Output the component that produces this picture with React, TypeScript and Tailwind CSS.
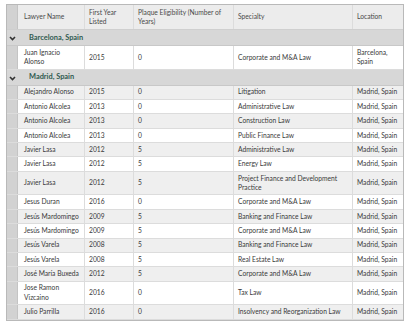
import React from "react";

type Row = { name: string; year: string; plaque: string; specialty: string; location: string; tall?: boolean };

const groups: { title: string; rows: Row[] }[] = [
  {
    title: "Barcelona, Spain",
    rows: [
      { name: "Juan Ignacio\nAlonso", year: "2015", plaque: "0", specialty: "Corporate and M&A Law", location: "Barcelona,\nSpain", tall: true },
    ],
  },
  {
    title: "Madrid, Spain",
    rows: [
      { name: "Alejandro Alonso", year: "2015", plaque: "0", specialty: "Litigation", location: "Madrid, Spain" },
      { name: "Antonio Alcolea", year: "2013", plaque: "0", specialty: "Administrative Law", location: "Madrid, Spain" },
      { name: "Antonio Alcolea", year: "2013", plaque: "0", specialty: "Construction Law", location: "Madrid, Spain" },
      { name: "Antonio Alcolea", year: "2013", plaque: "0", specialty: "Public Finance Law", location: "Madrid, Spain" },
      { name: "Javier Lasa", year: "2012", plaque: "5", specialty: "Administrative Law", location: "Madrid, Spain" },
      { name: "Javier Lasa", year: "2012", plaque: "5", specialty: "Energy Law", location: "Madrid, Spain" },
      { name: "Javier Lasa", year: "2012", plaque: "5", specialty: "Project Finance and Development\nPractice", location: "Madrid, Spain", tall: true },
      { name: "Jesus Duran", year: "2016", plaque: "0", specialty: "Corporate and M&A Law", location: "Madrid, Spain" },
      { name: "Jesús Mardomingo", year: "2009", plaque: "5", specialty: "Banking and Finance Law", location: "Madrid, Spain" },
      { name: "Jesús Mardomingo", year: "2009", plaque: "5", specialty: "Corporate and M&A Law", location: "Madrid, Spain" },
      { name: "Jesús Varela", year: "2008", plaque: "5", specialty: "Banking and Finance Law", location: "Madrid, Spain" },
      { name: "Jesús Varela", year: "2008", plaque: "5", specialty: "Real Estate Law", location: "Madrid, Spain" },
      { name: "José María Buxeda", year: "2012", plaque: "5", specialty: "Corporate and M&A Law", location: "Madrid, Spain" },
      { name: "Jose Ramon\nVizcaino", year: "2016", plaque: "0", specialty: "Tax Law", location: "Madrid, Spain", tall: true },
      { name: "Julio Parrilla", year: "2016", plaque: "0", specialty: "Insolvency and Reorganization Law", location: "Madrid, Spain" },
    ],
  },
];

const cell = "flex items-center px-[4px] border-r border-[#dcdcdc] leading-[9.5px] whitespace-pre overflow-hidden";

const Chevron = () => (
  <svg width="7" height="5" viewBox="0 0 7 5" className="mt-[2px]">
    <path d="M1 1 L3.5 3.5 L6 1" stroke="#333" strokeWidth="1.6" fill="none" />
  </svg>
);

export default function App() {
  let idx = 0;
  return (
    <div className="w-[420px] h-[329px] bg-white pt-[4px] pl-[6px]" style={{ fontFamily: 'Lato, "Noto Sans", sans-serif' }}>
      <div className="w-[398px] border border-[#b9b9b9] text-[6.7px] text-[#3a3a3a]">
        {/* header */}
        <div className="flex h-[25px] bg-[#ececec] border-b border-[#cfcfcf] text-[#4a4a4a]">
          <div className="w-[11px] bg-[#d2d2d2] border-r border-[#c4c4c4]" />
          <div className={`${cell} w-[67px] pl-[6px]`}>Lawyer Name</div>
          <div className={`${cell} w-[49px]`}>{"First Year\nListed"}</div>
          <div className={`${cell} w-[100px]`}>{"Plaque Eligibility (Number of\nYears)"}</div>
          <div className={`${cell} w-[119px]`}>Specialty</div>
          <div className={`${cell} w-[50px] border-r-0`}>Location</div>
        </div>
        {groups.map((g) => (
          <div key={g.title}>
            <div className="flex h-[16px] bg-[#d7d7d7] border-b border-[#c8c8c8]">
              <div className="w-[11px] flex items-center justify-center">
                <Chevron />
              </div>
              <div className="flex items-center pl-[11px] font-bold text-[7.4px] text-[#2f5a50]">{g.title}</div>
            </div>
            {g.rows.map((r, i) => {
              const odd = idx++ % 2 === 1;
              return (
                <div
                  key={i}
                  className={`flex border-b border-[#dcdcdc] ${r.tall ? "h-[23.5px]" : "h-[14.4px]"} ${odd ? "bg-[#efefef]" : "bg-white"}`}
                >
                  <div className="w-[11px] bg-[#d2d2d2] border-r border-[#c4c4c4]" />
                  <div className={`${cell} w-[67px] pl-[6px]`}>{r.name}</div>
                  <div className={`${cell} w-[49px]`}>{r.year}</div>
                  <div className={`${cell} w-[100px]`}>{r.plaque}</div>
                  <div className={`${cell} w-[119px]`}>{r.specialty}</div>
                  <div className={`${cell} w-[50px] border-r-0`}>{r.location}</div>
                </div>
              );
            })}
          </div>
        ))}
      </div>
    </div>
  );
}
